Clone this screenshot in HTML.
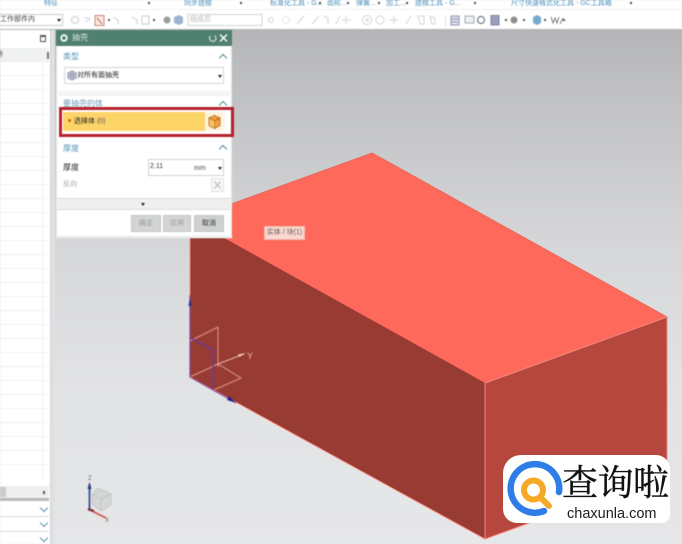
<!DOCTYPE html>
<html lang="zh"><head><meta charset="utf-8"><title>抽壳</title>
<style>
html,body{margin:0;padding:0}
body{width:682px;height:544px;overflow:hidden;position:relative;background:#dfe0e2;font-family:"Liberation Sans","Noto Sans CJK SC",sans-serif}
.a{position:absolute}
.soft{filter:blur(.6px)}
.t{position:absolute;white-space:nowrap;line-height:1}
.bl{color:#4b8fb8;font-size:7px}
.d{color:#222;font-size:7px}
.h{color:#4e8db5;font-size:8px}
.chev{position:absolute;width:5px;height:5px;border-left:1.3px solid #4a8a9e;border-top:1.3px solid #4a8a9e;transform:rotate(45deg)}
.v{position:absolute;width:5px;height:5px;border-right:1.5px solid #5f93ad;border-bottom:1.5px solid #5f93ad;transform:rotate(45deg)}
.tri{position:absolute;width:0;height:0;border-left:2.5px solid transparent;border-right:2.5px solid transparent;border-top:3px solid #222}
.sq{position:absolute;width:1.5px;height:1.5px;background:#444}
.row{position:absolute;left:0;width:48px;height:1px;background:#eef0f0}
.btn{position:absolute;top:215px;height:17px;background:#d3d5d5;border:1px solid #c4c6c6;box-sizing:border-box;text-align:center;font-size:7px;line-height:15px;color:#9a9c9c}
</style></head><body>

<div class="a" style="left:0;top:30px;width:682px;height:514px;background:linear-gradient(180deg,#b5b6b8 0,#c4c5c7 90px,#d6d7d9 220px,#e2e3e5 360px,#e6e7e9 514px)"></div>

<svg class="a" style="left:0;top:0" width="682" height="544" viewBox="0 0 682 544">
<polygon points="372,153 667,317 485,383 190,219" fill="#fe695c" stroke="#e8685c" stroke-width="1"/>
<polygon points="190,219 485,383 485,539 190,377" fill="#983b32"/>
<polygon points="485,383 667,317 667,473 485,539" fill="#b6473e"/>
<path d="M190 219V377L485 539V383M485 383L667 317V473L485 539" fill="none" stroke="#f58a7e" stroke-width="1"/>
<g filter="url(#s)">
<path d="M190 341L218 327V367M190 377L218 364L241 378L214 390" fill="none" stroke="#d99a8b" stroke-width="1"/>
<path d="M218 364L244 354" stroke="#e8b5a8" stroke-width="1" fill="none"/>
<path d="M246 353L238 354.500L239 357Z" fill="#f2d0c8"/>
<path d="M191 338L213 350V388" fill="none" stroke="#6d3a8e" stroke-width="1.600"/>
<path d="M190 295V377" stroke="#6b3aa0" stroke-width="1"/>
<path d="M190 297L188.500 306H191.500Z" fill="#2a2a90"/>
<path d="M190 377L236 403" stroke="#6b3aa0" stroke-width="1"/>
<path d="M236 403L229 396L227 400Z" fill="#22228c"/>
<text x="247" y="359" font-size="9" fill="#e8b8ac" font-family="Liberation Sans">Y</text>
</g>
<defs><filter id="s"><feGaussianBlur stdDeviation=".4"/></filter></defs>
<!-- mini triad -->
<g filter="url(#s)">
<path d="M98 488L111 494V505L101 511L92 504V494Z" fill="#d3d6d4" stroke="#c6cac7"/>
<path d="M92 494L101 499L111 494M101 499V511" fill="none" stroke="#c2c7c3"/>
<path d="M89.500 511V484" stroke="#4a5c9c" stroke-width="2"/>
<path d="M89.500 482L87.500 489H91.500Z" fill="#26407f"/>
<path d="M88 509L106 518" stroke="#d2665e" stroke-width="2"/>
<path d="M88 509L94 511" stroke="#7a2a28" stroke-width="2"/>
<text x="88" y="480" font-size="6" fill="#5a6a94" font-family="Liberation Sans">Z</text>
<text x="105" y="522" font-size="6" fill="#7a5a5a" font-family="Liberation Sans">X</text>
</g>
</svg>

<div class="a soft" style="left:264px;top:226px;width:41px;height:14px;background:#fbd9d2;border:1px solid #f3b9ae;box-sizing:border-box;font-size:7px;line-height:12px;text-align:center;color:#6b5b58;white-space:nowrap">实体 / 块(1)</div>

<!-- top ribbon -->
<div class="a soft" style="left:0;top:0;width:682px;height:30px;background:#fff">
 <div class="a" style="left:0;top:29px;width:682px;height:1px;background:#a8a9ab"></div>
 <div class="a" style="left:0;top:9px;width:682px;height:1px;background:#edf0f2"></div>
 <span class="t bl" style="left:44px;top:0">特征</span>
 <span class="t bl" style="left:184px;top:0">同步建模</span>
 <span class="t bl" style="left:270px;top:0">标准化工具 - G...</span>
 <span class="t bl" style="left:327px;top:0">齿轮...</span>
 <span class="t bl" style="left:356px;top:0">弹簧...</span>
 <span class="t bl" style="left:386px;top:0">加工...</span>
 <span class="t bl" style="left:415px;top:0">建模工具 - G...</span>
 <span class="t bl" style="left:511px;top:0">尺寸快速格式化工具 - GC工具箱</span>
 <span class="sq" style="left:148px;top:2px"></span><span class="sq" style="left:240px;top:2px"></span><span class="sq" style="left:319px;top:2px"></span><span class="sq" style="left:347px;top:2px"></span><span class="sq" style="left:378px;top:2px"></span><span class="sq" style="left:406px;top:2px"></span><span class="sq" style="left:474px;top:2px"></span><span class="sq" style="left:630px;top:2px"></span>

 <div class="a" style="left:-2px;top:14px;width:65px;height:12px;border:1px solid #c9cbcd;box-sizing:border-box"></div>
 <span class="t d" style="left:0;top:16px;color:#444">工作部件内</span>
 <div class="tri" style="left:57px;top:19px"></div>

 <svg class="a" style="left:65px;top:12px" width="617" height="16" viewBox="65 12 617 16">
  <g fill="none" stroke="#c8ccce" stroke-width="1">
   <circle cx="75" cy="20" r="3.500"/><path d="M84 18L90 18M86 22L90 19"/>
   <path d="M113 17L118 20V24M132 17L137 20V24"/>
   <rect x="142" y="16" width="7" height="8"/>
  </g>
  <rect x="95" y="15.500" width="9" height="10" fill="#fbe8df" stroke="#c08a7a"/>
  <path d="M97 18L102 24" stroke="#d66" />
  <circle cx="167" cy="20" r="3.500" fill="#9a9da0"/>
  <path d="M174 17L179 15L183 17V23L179 25L174 23Z" fill="#9ab4d2"/>
  <rect x="188" y="14.500" width="74" height="11" fill="#fff" stroke="#d0d2d4"/>
  <g fill="none" stroke="#d2d5d7">
   <circle cx="271" cy="20" r="2.500"/><circle cx="286" cy="20" r="3.500" stroke-dasharray="1.500"/>
   <path d="M297 24L304 16M312 24L319 16M324 16L328 18V24M336 24L340 16M346 24V16M342 20H351"/>
   <circle cx="367" cy="20" r="4.500"/><circle cx="367" cy="20" r="1.200"/><circle cx="380" cy="20" r="4"/>
   <path d="M394 16V24M390 20H398M406 24L411 16"/>
   <path d="M418 16H424V24H420ZM430 16L435 18V24H432Z"/>
  </g>
  <path d="M445.500 16V26" stroke="#dfe1e3"/>
  <g fill="none" stroke="#8a90b4"><rect x="451" y="16" width="8" height="9" fill="#e2e4f0"/><path d="M452 19H458M452 22H458"/></g>
  <rect x="465" y="16" width="9" height="7" fill="#eef0f0" stroke="#a8aeb4"/>
  <circle cx="481" cy="20" r="3.500" fill="none" stroke="#6e7c8a" stroke-width="1.200"/>
  <rect x="491" y="15.500" width="8" height="9.500" fill="#9a9fc0" stroke="#7f84a8"/>
  <circle cx="514" cy="20" r="3.500" fill="#8a9090"/>
  <path d="M533 17L537 15L541 17V23L537 25L533 23Z" fill="#76aace"/>
  <path d="M551 17L553 23L555 18L557 23L559 17M560 24L563 18" fill="none" stroke="#7a7f86"/>
  <g fill="#555"><rect x="505" y="19" width="2" height="2"/><rect x="523" y="19" width="2" height="2"/><rect x="544" y="19" width="2" height="2"/><rect x="563" y="19" width="2" height="2"/><rect x="108" y="19" width="2" height="2"/><rect x="153" y="19" width="2" height="2"/></g>
 </svg>
 <span class="t" style="left:190px;top:16px;font-size:7px;color:#b6b8ba">组成员</span>
</div>

<!-- left navigator -->
<div class="a soft" style="left:0;top:30px;width:55px;height:514px;background:#fff">
 <div class="a" style="left:50px;top:0;width:5px;height:514px;background:#dfe0e2;border-left:1px solid #cfd1d3;box-sizing:border-box"></div>
 <div class="a" style="left:40px;top:5px;width:6px;height:7px;border:1px solid #555;border-top-width:2px;box-sizing:border-box"></div>
 <div class="a" style="left:0;top:18px;width:49px;height:14px;background:#eff0f0"></div>
 <span class="t" style="left:-4px;top:21px;font-size:7px;color:#333">新</span>
 <div class="a" style="left:47px;top:22px;width:2px;height:7px;background:#777"></div>
 <div class="row" style="top:45px"></div><div class="row" style="top:59px"></div><div class="row" style="top:73px"></div><div class="row" style="top:84px"></div><div class="row" style="top:98px"></div><div class="row" style="top:112px"></div><div class="row" style="top:126px"></div><div class="row" style="top:140px"></div><div class="row" style="top:154px"></div><div class="row" style="top:168px"></div><div class="row" style="top:182px"></div><div class="row" style="top:196px"></div><div class="row" style="top:210px"></div><div class="row" style="top:224px"></div><div class="row" style="top:238px"></div><div class="row" style="top:252px"></div><div class="row" style="top:266px"></div><div class="row" style="top:280px"></div><div class="row" style="top:294px"></div><div class="row" style="top:308px"></div><div class="row" style="top:322px"></div><div class="row" style="top:336px"></div><div class="row" style="top:350px"></div><div class="row" style="top:364px"></div><div class="row" style="top:378px"></div><div class="row" style="top:392px"></div><div class="row" style="top:406px"></div><div class="row" style="top:420px"></div><div class="row" style="top:434px"></div>
 <div class="a" style="left:42px;top:20px;width:1px;height:430px;background:#f3f4f4"></div>
 <div class="a" style="left:0;top:456px;width:49px;height:12px;background:#eeeeee"></div>
 <div class="a" style="left:0;top:457px;width:6px;height:10px;background:#c9caca"></div>
 <div class="a" style="left:43px;top:461px;width:2px;height:3px;background:#555"></div>
 <div class="a" style="left:0;top:468px;width:49px;height:3px;background:#b9bbbb"></div>
 <div class="row" style="top:486px;width:49px;background:#d8dadb"></div>
 <div class="row" style="top:501px;width:49px;background:#d8dadb"></div>
 <div class="v" style="left:41px;top:475px"></div>
 <div class="v" style="left:41px;top:490px"></div>
 <div class="v" style="left:41px;top:505px"></div>
</div>

<!-- dialog -->
<div class="a soft" style="left:56px;top:30px;width:176px;height:208px;background:#fff;box-sizing:border-box;border:1px solid #e4e5e6">
 <div class="a" style="left:-1px;top:-1px;width:176px;height:16px;background:#50806f"></div>
</div>
<div class="a soft" style="left:56px;top:30px;width:176px;height:208px">
 <svg class="a" style="left:0;top:0" width="176" height="16">
  <circle cx="8" cy="8" r="2.800" fill="none" stroke="#fff" stroke-width="1.800"/>
  <path d="M158.500 5.500A3.200 3.200 0 1 1 154.500 6" fill="none" stroke="#e8f0ee" stroke-width="1"/>
  <path d="M164 4.500L171 11.500M171 4.500L164 11.500" stroke="#fff" stroke-width="1.400"/>
 </svg>
 <span class="t" style="left:16px;top:4px;font-size:8px;color:#dfeae6">抽壳</span>

 <span class="t h" style="left:7px;top:23px">类型</span>
 <div class="chev" style="left:164px;top:25px"></div>
 <div class="a" style="left:8px;top:37px;width:160px;height:17px;border:1px solid #d4d6d6;box-sizing:border-box"></div>
 <svg class="a" style="left:10px;top:40px" width="12" height="12"><path d="M6 1L10 3V8L6 10L2 8V3Z" fill="#cfcfe0" stroke="#8c8ca6"/><circle cx="6" cy="5.500" r="1.800" fill="none" stroke="#7a7a96"/></svg>
 <span class="t d" style="left:21px;top:42px">对所有面抽壳</span>
 <div class="tri" style="left:162px;top:45px"></div>
 <div class="a" style="left:1px;top:61px;width:174px;height:5px;background:#f3f4f4"></div>

 <span class="t" style="left:7px;top:70px;font-size:8px;color:#6d99b4">要抽壳的体</span>
 <div class="chev" style="left:164px;top:72px"></div>
 <div class="a" style="left:7px;top:82px;width:142px;height:19px;background:#fdd468"></div>
 <div class="a" style="left:149px;top:82px;width:19px;height:19px;background:#fbf3dd"></div>
 <div class="a" style="left:12px;top:89px;width:3px;height:3px;border-radius:50%;background:#d0621a"></div>
 <span class="t d" style="left:18px;top:88px">选择体 <span style="color:#555">(0)</span></span>
 <svg class="a" style="left:151px;top:84px" width="15" height="16"><path d="M7.500 1.500L13 4V11.500L7.500 14.500L2 11.500V4Z" fill="#f2a53a" stroke="#c9782a"/><path d="M2 4L7.500 7L13 4M7.500 7V14.500" fill="none" stroke="#a86622"/><path d="M2.500 4.500L7.500 7.200V14L2.500 11.200Z" fill="#f9c062"/></svg>
 <div class="a" style="left:3px;top:77px;width:175px;height:30px;box-sizing:border-box;border:3px solid #b5222e"></div>

 <span class="t h" style="left:7px;top:115px">厚度</span>
 <div class="chev" style="left:164px;top:116px"></div>
 <span class="t d" style="left:7px;top:134px;font-size:8px">厚度</span>
 <div class="a" style="left:92px;top:129px;width:76px;height:17px;border:1px solid #cfd1d1;box-sizing:border-box"></div>
 <span class="t" style="left:94px;top:133px;font-size:7px;color:#333">2.11</span>
 <span class="t" style="left:138px;top:135px;font-size:7px;color:#444">mm</span>
 <div class="tri" style="left:162px;top:137px"></div>
 <span class="t" style="left:7px;top:151px;font-size:7px;color:#a6a8a8">反向</span>
 <div class="a" style="left:155px;top:148px;width:13px;height:14px;background:#f6f7f7;border:1px solid #e2e3e3;box-sizing:border-box"></div>
 <svg class="a" style="left:155px;top:148px" width="13" height="14"><path d="M3.500 3.500L9.500 10.500M9.500 3.500L3.500 10.500" stroke="#b4bcb8" stroke-width="1"/></svg>

 <div class="a" style="left:1px;top:168px;width:174px;height:12px;background:#efefef;border-top:1px solid #dcdddd;border-bottom:1px solid #dcdddd;box-sizing:border-box"></div>
 <div class="tri" style="left:85px;top:173px"></div>
 <div class="btn" style="left:75px;top:185px;width:30px">确定</div>
 <div class="btn" style="left:107px;top:185px;width:28px">应用</div>
 <div class="btn" style="left:138px;top:185px;width:30px;background:#cfd1d1;color:#333">取消</div>
 <div class="a" style="left:0;top:206px;width:176px;height:2px;background:#e9eaea"></div>
</div>

<!-- watermark logo -->
<div class="a" style="left:503px;top:455px;width:167px;height:68px;background:#fff;border-radius:18px 14px 8px 14px"></div>
<svg class="a" style="left:503px;top:455px" width="70" height="68" viewBox="503 455 70 68">
 <path d="M559 492A24.300 24.300 0 1 0 544 511" fill="none" stroke="#2f7de8" stroke-width="6.500" stroke-linecap="round"/>
 <circle cx="533.500" cy="490" r="9.500" fill="none" stroke="#f8a827" stroke-width="6"/>
 <path d="M541 498L549 506" stroke="#f8a827" stroke-width="6" stroke-linecap="round"/>
</svg>
<span class="t" style="left:562px;top:465px;font-size:36px;letter-spacing:-.5px;color:#111;-webkit-text-stroke:.35px #111;font-family:'Liberation Serif','Noto Serif CJK SC',serif">查询啦</span>
<span class="t" style="left:567px;top:507px;font-size:14.500px;color:#1c1c1c">chaxunla.com</span>
</body></html>
